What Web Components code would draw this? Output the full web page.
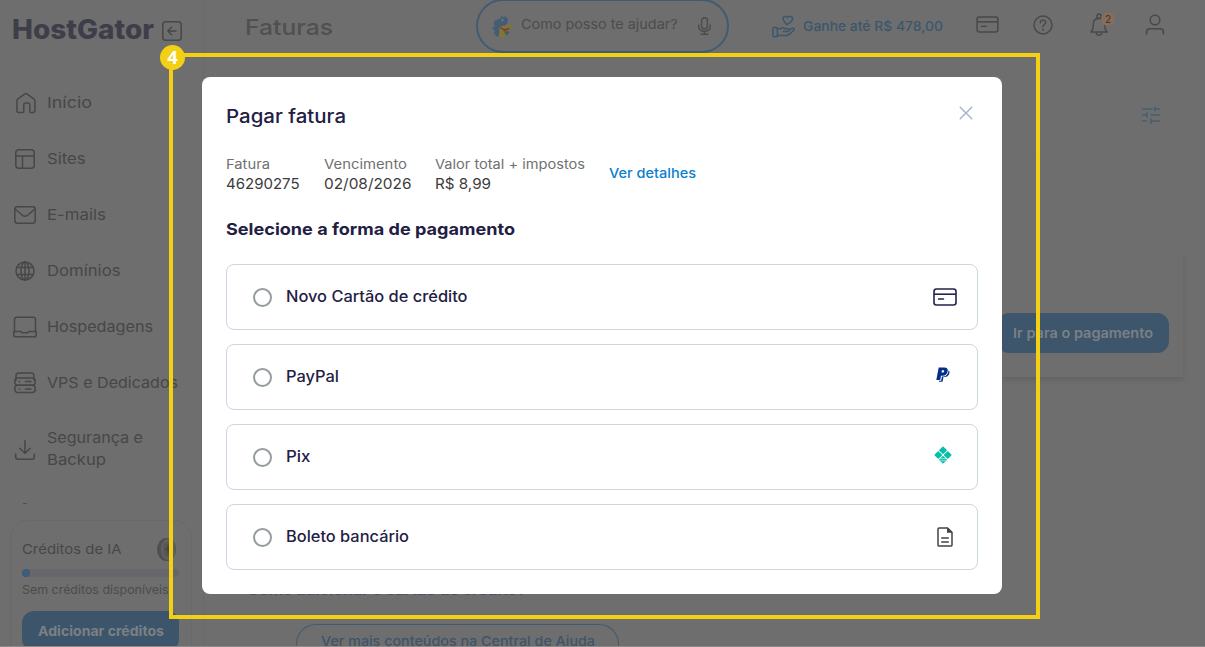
<!DOCTYPE html>
<html lang="pt-BR">
  <head>
    <meta charset="UTF-8">
    <meta name="viewport" content="width=device-width, initial-scale=1.0">

    <title>Faturas</title>

    <style>
      body {
        margin: 0;
        overflow: hidden;
        background: #6e6e6e;
        font-family: Inter, "Liberation Sans", sans-serif;
      }
    </style>
  </head>

  <body>
    <invoice-app></invoice-app>

    <template id="app-template">
      <style>
        :host {
          display: grid;
          grid-template-columns: 204px 1fr;
          position: relative;
          box-sizing: border-box;
          width: 1205px;
          height: 647px;
          overflow: hidden;
          border-bottom: 1px solid #8b8b8b;
        }

        pay-dialog {
          position: absolute;
          left: 202px;
          top: 77px;
        }

        step-marker {
          position: absolute;
          left: 169px;
          top: 53px;
        }
      </style>

      <side-bar></side-bar>
      <main-area></main-area>

      <pay-dialog heading="Pagar fatura">
        <info-pair label="Fatura" value="46290275" lw="44" vw="73.5"></info-pair>
        <info-pair label="Vencimento" value="02/08/2026" lw="83" vw="87.5"></info-pair>
        <info-pair label="Valor total + impostos" value="R$ 8,99" lw="150" vw="56"></info-pair>
        <pay-option slot="option" icon="card" width="181.5">Novo Cartão de crédito</pay-option>
        <pay-option slot="option" icon="paypal" width="53">PayPal</pay-option>
        <pay-option slot="option" icon="pix" width="24.5">Pix</pay-option>
        <pay-option slot="option" icon="doc" width="123">Boleto bancário</pay-option>
      </pay-dialog>

      <step-marker>4</step-marker>
    </template>

    <template id="sidebar-template">
      <style>
        :host {
          display: flex;
          flex-direction: column;
          box-sizing: border-box;
          height: 646px;
          overflow: hidden;
          border-right: 1px solid #6a6a6a;
          color: #474747;
        }

        .brand {
          display: flex;
          align-items: center;
          flex: none;
          height: 59px;
          margin-bottom: 16px;
          padding-left: 12px;
          gap: 8px;
        }

        .brand hg-icon {
          margin-top: 3px;
        }

        .logo {
          font-size: 27px;
          font-weight: 800;
          color: #3e3e4a;
        }

        .cut {
          flex: none;
          height: 32px;
          padding-left: 23px;
        }

        .cut i {
          display: block;
          width: 4px;
          height: 1px;
          margin-top: 15px;
          background: #515151;
        }

        .credits {
          box-sizing: border-box;
          width: 182px;
          height: 140px;
          flex: none;
          margin-left: 10px;
          padding: 16px 12px 0 11px;
          border: 1px solid #696969;
          border-radius: 18px;
        }

        .title {
          display: flex;
          justify-content: space-between;
          align-items: center;
          height: 24px;
          font-size: 13.5px;
          padding-right: 3px;
        }

        .bar {
          height: 8px;
          margin-top: 8px;
          border-radius: 4px;
          background: #66666b;
        }

        .bar::before {
          content: "";
          display: block;
          width: 8px;
          height: 8px;
          border-radius: 4px;
          background: #3d5c77;
        }

        .note {
          margin-top: 4px;
          line-height: 18px;
          font-size: 12px;
          color: #4c4c4c;
        }

        .button {
          display: flex;
          justify-content: center;
          align-items: center;
          height: 40px;
          margin-top: 12px;
          border-radius: 12px;
          background: #3c556a;
          color: #7b8085;
          font-size: 13.5px;
          font-weight: 700;
        }
      </style>

      <div class="brand">
        <fit-text class="logo" width="142">HostGator</fit-text>
        <hg-icon name="collapse" width="20" height="20"></hg-icon>
      </div>
      <nav>
        <nav-item icon="home" width="45">Início</nav-item>
        <nav-item icon="layout" width="38.5">Sites</nav-item>
        <nav-item icon="mail" width="59">E-mails</nav-item>
        <nav-item icon="globe" width="73.5">Domínios</nav-item>
        <nav-item icon="laptop" width="106">Hospedagens</nav-item>
        <nav-item icon="server" width="131">VPS e Dedicados</nav-item>
        <nav-item icon="download" width="96" second="Backup" second-width="59" tall>Segurança e</nav-item>
      </nav>
      <div class="cut"><i></i></div>
      <div class="credits">
        <div class="title">
          <fit-text width="99.5">Créditos de IA</fit-text>
          <hg-icon name="coin" width="19" height="23"></hg-icon>
        </div>
        <div class="bar"></div>
        <div class="note"><fit-text width="146.5">Sem créditos disponíveis</fit-text></div>
        <div class="button"><fit-text width="126">Adicionar créditos</fit-text></div>
      </div>
    </template>

    <template id="main-template">
      <style>
        :host {
          display: block;
          height: 646px;
          overflow: hidden;
          color: #484848;
        }

        header {
          display: flex;
          align-items: center;
          height: 52px;
          padding-left: 41px;
        }

        h1 {
          width: 231px;
          margin: 2px 0 0;
          font-size: 22px;
          font-weight: 500;
          color: #505050;
        }

        .search {
          display: flex;
          align-items: center;
          flex: none;
          box-sizing: border-box;
          width: 253px;
          height: 54px;
          padding: 0 16px 0 13px;
          border: 2px solid #415b72;
          border-radius: 27px;
          font-size: 13.5px;
          color: #4c4c4c;
        }

        .search fit-text {
          margin: 0 auto 4px 8px;
        }

        .gain {
          display: flex;
          align-items: center;
          gap: 8px;
          margin-left: 43px;
          color: #3c566c;
          font-size: 13.5px;
          font-weight: 500;
        }

        .tools {
          display: grid;
          grid-template-columns: repeat(4, 24px);
          gap: 32px;
          align-items: center;
          justify-items: center;
          margin: 0 0 3px 32px;
        }

        .bell {
          position: relative;
          display: block;
          height: 24px;
        }

        .bell b {
          position: absolute;
          left: 11px;
          top: -1px;
          width: 14px;
          line-height: 14px;
          border-radius: 7px;
          text-align: center;
          font-size: 10px;
          font-weight: 500;
          background: #866d5c;
          color: #453a33;
        }

        .filters {
          display: flex;
          justify-content: flex-end;
          align-items: center;
          box-sizing: border-box;
          height: 82px;
          margin: 22px 22px 0 16px;
          padding-right: 22px;
          border-bottom: 1px solid #6c6c6c;
          color: #46606f;
        }

        .invoice {
          display: flex;
          justify-content: flex-end;
          align-items: flex-end;
          box-sizing: border-box;
          height: 197px;
          margin: 24px 22px 0 16px;
          padding: 0 14px 24px;
          box-shadow: 0 3px 5px #636363;
          background: #6e6e6e;
          clip-path: inset(76px -6px -8px 0);
        }

        .pay {
          display: flex;
          justify-content: center;
          align-items: center;
          width: 172px;
          height: 40px;
          border-radius: 12px;
          background: #3d566b;
          color: #7b8085;
          font-size: 13.5px;
          font-weight: 600;
        }

        .help {
          color: #3f5468;
          padding: 204px 0 0 43px;
          font-size: 15px;
          font-weight: 700;
          line-height: 18px;
        }

        .more {
          display: flex;
          align-items: flex-start;
          justify-content: center;
          box-sizing: border-box;
          width: 323px;
          height: 22px;
          margin: 25px 0 0 49px;
          padding-top: 6px;
          border: 1px solid #425a70;
          border-bottom: 0;
          border-radius: 20px 20px 0 0;
          font-size: 13.5px;
          line-height: 20px;
          font-weight: 500;
        }
      </style>

      <header>
        <h1><fit-text width="88">Faturas</fit-text></h1>
        <div class="search">
          <hg-icon name="gator" width="22" height="24"></hg-icon>
          <fit-text width="156.5">Como posso te ajudar?</fit-text>
          <hg-icon name="mic" width="13" height="18"></hg-icon>
        </div>
        <div class="gain">
          <hg-icon name="hand" width="23" height="24"></hg-icon>
          <fit-text width="140">Ganhe até R$ 478,00</fit-text>
        </div>
        <div class="tools">
          <hg-icon name="card" width="23" height="17"></hg-icon>
          <hg-icon name="help" width="20" height="20"></hg-icon>
          <span class="bell"><hg-icon name="bell" width="18" height="24"></hg-icon><b>2</b></span>
          <hg-icon name="user" width="20" height="21"></hg-icon>
        </div>
      </header>
      <div class="filters"><hg-icon name="filter" width="20" height="18"></hg-icon></div>
      <div class="invoice"><div class="pay"><fit-text width="140">Ir para o pagamento</fit-text></div></div>
      <div class="help">
        <fit-text width="279">Como adicionar o cartão de crédito?</fit-text>
        <div class="more"><fit-text width="274">Ver mais conteúdos na Central de Ajuda</fit-text></div>
      </div>
    </template>

    <template id="dialog-template">
      <style>
        :host {
          display: block;
          box-sizing: border-box;
          width: 800px;
          height: 517px;
          padding: 24px;
          border-radius: 8px;
          background: #fff;
          color: #1f2044;
        }

        .top {
          display: flex;
          justify-content: space-between;
          height: 30px;
          line-height: 31px;
          font-size: 18.5px;
          font-weight: 500;
        }

        .top hg-icon {
          margin: 5px 5px 0 0;
          color: #a3b2cd;
        }

        .summary {
          display: flex;
          gap: 24px;
          height: 40px;
          margin-top: 23px;
        }

        .link {
          line-height: 38px;
          font-size: 13.5px;
          font-weight: 500;
          color: #0d7fcd;
        }

        h2 {
          margin: 24px 0;
          line-height: 22px;
          font-size: 16.5px;
          font-weight: 700;
        }

        .options {
          display: grid;
          gap: 14px;
        }
      </style>

      <div class="top">
        <fit-text class="heading" width="120"></fit-text>
        <hg-icon name="close" width="14" height="14"></hg-icon>
      </div>
      <div class="summary">
        <slot></slot>
        <fit-text class="link" width="87">Ver detalhes</fit-text>
      </div>
      <h2><fit-text width="289">Selecione a forma de pagamento</fit-text></h2>
      <div class="options"><slot name="option"></slot></div>
    </template>

    <script>
      (function() {
        const CARD = '<rect x="1" y="1" width="22" height="16" rx="2.4" fill="none" stroke="currentColor" stroke-width="1.6"/><path d="M1 6.2h22" stroke="currentColor" stroke-width="1.6"/><path d="M5.5 11h5" stroke="currentColor" stroke-width="1.5" stroke-linecap="round"/>';

        // each entry: viewBox, markup
        const ICONS = {
          collapse: ['0 0 20 20', '<g fill="none" stroke="currentColor" stroke-width="1.5" stroke-linecap="round" stroke-linejoin="round"><rect x=".8" y=".8" width="18.4" height="18.4" rx="2.8"/><path d="M14 10H6M9.5 6.3L5.8 10l3.7 3.7"/></g>'],
          home: ['0 0 24 24', '<path d="M4 9.5Q4 8.5 5 7.8l7-4.9q1-.7 2 0l7 5.3q.9.7.9 1.7v9.6q0 2-1.7 2h-2.4q-1 0-1-1v-7q0-1.6-1.6-1.6h-2.8q-1.6 0-1.6 1.6v7q0 1-1 1H5.6q-1.7 0-1.7-2z"/>'],
          layout: ['0 0 24 24', '<rect x="2.8" y="2.8" width="18.4" height="18.4" rx="3"/><path d="M3 9h18M9.5 9v12"/>'],
          mail: ['0 0 24 24', '<rect x="1.8" y="3.8" width="20.4" height="16.4" rx="2.6"/><path d="M2 6l7.5 6.3q2.5 1.9 5 0L22 6"/>'],
          globe: ['0 0 24 24', '<circle cx="12" cy="12" r="9"/><ellipse cx="12" cy="12" rx="4" ry="9"/><path d="M12 3v18M4 8.6h16M4 15.4h16"/>'],
          laptop: ['0 0 24 24', '<path d="M1.5 16V4.500q0-2.200 2.200-2.200h16.600q2.200 0 2.200 2.200V16M.8 16.500h6.500q1 0 1.500.7.5.6 1.400.6h3.600q.9 0 1.400-.6.5-.7 1.500-.7h6.500v3.800q0 1.500-1.500 1.500H2.300q-1.500 0-1.500-1.500z"/>'],
          server: ['0 0 24 24', '<path d="M3 9V4.800Q3 2 5.600 2h12.800Q21 2 21 4.800V9"/><rect x="1.800" y="7" width="20.400" height="7.300" rx="3"/><rect x="1.800" y="14.300" width="20.400" height="7.300" rx="3"/><path d="M6.300 10.600h.4M12.500 10.600H18M6.300 17.900h.4M12.500 17.900H18"/>'],
          download: ['0 0 24 24', '<path d="M12 2.500V15M6.800 10.300L12 15.200l5.200-4.900M2.700 16v3q0 2.200 2.200 2.200h14.200q2.200 0 2.200-2.200v-3"/>'],
          coin: ['0 0 19 23', '<ellipse cx="9.5" cy="11.5" rx="9.5" ry="11.5" fill="#505050"/><ellipse cx="11" cy="11.5" rx="7.4" ry="10.5" fill="#606060"/><ellipse cx="11" cy="11.5" rx="5.3" ry="8" fill="#585858"/><path d="M11 6l1.6 3.6L15 11l-2.4 1.8L11 17l-1.5-4.2L7.2 11l2.3-1.4z" fill="#494949"/>'],
          gator: ['0 0 22 24', '<path d="M3 9l1-3 2 .5 1-2 2 .7L10 2l2.500 1 2-.5L17 5l-.5 4.500-3 2.500 5 6.500-3 3.500-9 1-3.500-3L4 17l-3-3 2.500-1.500z" fill="#425d76"/><path d="M8.500 11.500q5 1.500 8-1l4 1-.5 3.500q-4 4-8 1.500l3.500 5-2 2-6-.5q1-4 1-11.500z" fill="#857337"/><path d="M8 10.500q3 4.500 7 4.500l4-1.500q-2 4-6 3-4-1.500-5-6z" fill="#743d32"/><circle cx="11.500" cy="6" r="1.200" fill="#757575"/>'],
          mic: ['0 0 13 18', '<g fill="none" stroke="currentColor" stroke-width="1.4" stroke-linecap="round"><rect x="3.6" y=".8" width="5.8" height="11" rx="2.9"/><path d="M.8 8v1q0 5.3 5.7 5.3T12.200 9V8M6.500 14.500v2.600M3 17.200h7"/></g>'],
          hand: ['0 0 23 24', '<g fill="none" stroke="currentColor" stroke-width="1.5" stroke-linejoin="round" stroke-linecap="round"><path d="M14.500 10.700l-3-4.500q-1.200-2.400.7-3.600 1.800-.8 3.200 1 2-2 4-1 2 1.400.8 3.700-1.400 2.700-5.700 4.400z"/><rect x="1" y="13.500" width="4.400" height="9.300" rx="1"/><path d="M5.500 14.800h2.800q1.800-1.600 3.800-.6l1.300.6h2.300q1.600.2 1.600 1.300 0 1.400-1.700 1.400h-4.200M17.300 15.800l2.900-1.400q1.500-.6 2 .6.2 1-2.200 2.800l-3.200 2.800q-1.200 1-3 1H5.500"/></g>'],
          card: ['0 0 24 18', CARD],
          help: ['0 0 20 20', '<g fill="none" stroke="currentColor" stroke-width="1.4" stroke-linecap="round"><circle cx="10" cy="10" r="9"/><path d="M7.400 7.800q0-2.700 2.600-2.700t2.600 2.300q0 1.300-1.400 2.200-1.200.8-1.200 2.200"/></g><circle cx="10" cy="14.700" r="1"/>'],
          bell: ['0 0 18 24', '<g fill="none" stroke="currentColor" stroke-width="1.4" stroke-linejoin="round"><path d="M.8 19q2.500-2.300 2.500-6V11q0-5.500 5.700-5.800 5.700.3 5.700 5.800v2q0 3.700 2.500 6z"/><circle cx="9" cy="3.200" r="2.200"/><path d="M6 19.300q.3 2.900 3 2.900t3-2.900"/></g>'],
          user: ['0 0 20 21', '<g fill="none" stroke="currentColor" stroke-width="1.5" stroke-linecap="round"><circle cx="10" cy="6" r="4.800"/><path d="M1.600 20v-2q0-3.300 3.300-3.300h10.200q3.300 0 3.300 3.300v2"/></g>'],
          filter: ['0 0 20 18', '<path d="M1 3h11M14 .8v4.400M14 3h5M1 9h4.500M6 6.500v5M9.500 9H19M1 15h5M10 12.700v5M10 15h9" fill="none" stroke="currentColor" stroke-width="1.7"/>'],
          close: ['0 0 14 14', '<path d="M1.200 1.200l11.600 11.600M12.800 1.200L1.200 12.800" stroke="currentColor" stroke-width="1.4" stroke-linecap="round"/>'],
          paypal: ['0 0 14 16', '<path d="M2.700.4h5.600q4 0 3.400 3.600Q11 8.700 6.500 8.700H5L4.200 13H.3z" fill="#003087"/><path d="M5.900 3.200h1.400q1.100 0 .9 1.200T6.700 5.500H5.500z" fill="#fff"/><path d="M12.700 3.300q1.200 1 .7 3-.8 3.600-4.700 3.600H7.500l-1 4.800H2.900l.2-1h2L6 9.500h1.800q3.900-.3 4.900-6.200z" fill="#003087"/>'],
          pix: ['0 0 18 18', '<g fill="#05bfa8" stroke="#05bfa8" stroke-width="1.400" stroke-linejoin="round"><path d="M9 1.200l3.200 3L9 7.300l-3.200-3.100zM1.200 9l3-3.100L7.500 9l-3.300 3.100zM16.800 9l-3-3.100L10.500 9l3.300 3.100zM9 10.800l3.200 3L9 16.800l-3.200-3z"/></g><path d="M5 12.700h8M6 14.800h6" stroke="#fff" stroke-width=".6"/>'],
          doc: ['0 0 16 20', '<path d="M10.500.9H2.200Q1 .9 1 2.100v15.800q0 1.200 1.200 1.200h11.600q1.200 0 1.200-1.200V5.400z" fill="none" stroke="currentColor" stroke-width="1.500"/><path d="M10 .6v5.100h5.400z" fill="currentColor"/><path d="M4.200 11h7.600M4.200 15h7.600" stroke="currentColor" stroke-width="1.500"/>']
        };

        const fromTemplate = (element, id) => {
          const shadow = element.attachShadow({ mode: 'open' });
          shadow.appendChild(document.getElementById(id).content.cloneNode(true));
          return shadow;
        };

        class HgIcon extends HTMLElement {
          connectedCallback() {
            if (this.shadowRoot) return;
            const name = this.getAttribute('name');
            const [box, markup] = ICONS[name];
            const isNav = this.hasAttribute('outline');
            const width = this.getAttribute('width');
            const height = this.getAttribute('height');
            this.attachShadow({ mode: 'open' }).innerHTML = `
              <style>
                :host { display: block; flex: none; width: ${width}px; height: ${height}px; }
                svg { display: block; }
              </style>
              <svg width="${width}" height="${height}" viewBox="${box}" ${isNav ? 'fill="none" stroke="currentColor" stroke-width="1.5" stroke-linecap="round" stroke-linejoin="round"' : 'fill="currentColor"'}>${markup}</svg>`;
          }
        }

        // Widens the line of text so that it takes the given width
        class FitText extends HTMLElement {
          connectedCallback() {
            if (!this.shadowRoot) {
              this.attachShadow({ mode: 'open' }).innerHTML = `
                <style>
                  :host { display: inline-block; flex: none; white-space: nowrap; width: ${this.getAttribute('width')}px; }
                  span { display: inline-block; transform-origin: 0 50%; }
                </style>
                <span><slot></slot></span>`;
            }
            this.fit();
            requestAnimationFrame(() => this.fit());
          }

          fit() {
            const span = this.shadowRoot.querySelector('span');
            if (!span.offsetWidth) return;
            span.style.transform = 'none';
            const natural = span.getBoundingClientRect().width;
            span.style.transform = `scaleX(${parseFloat(this.getAttribute('width')) / natural})`;
          }
        }

        class NavItem extends HTMLElement {
          connectedCallback() {
            if (this.shadowRoot) return;
            const second = this.getAttribute('second');
            this.attachShadow({ mode: 'open' }).innerHTML = `
              <style>
                :host {
                  display: flex;
                  align-items: center;
                  height: 56px;
                  padding-left: 13px;
                  gap: 10px;
                  font-size: 15px;
                  line-height: 22px;
                }
                :host([tall]) { height: 77px; }
                .text { display: flex; flex-direction: column; align-items: flex-start; margin-top: -1px; }
              </style>
              <hg-icon name="${this.getAttribute('icon')}" width="24" height="24" outline></hg-icon>
              <div class="text">
                <fit-text width="${this.getAttribute('width')}">${this.textContent}</fit-text>
                ${second ? `<fit-text width="${this.getAttribute('second-width')}">${second}</fit-text>` : ''}
              </div>`;
          }
        }

        class InfoPair extends HTMLElement {
          connectedCallback() {
            if (this.shadowRoot) return;
            this.attachShadow({ mode: 'open' }).innerHTML = `
              <style>
                :host { display: flex; flex-direction: column; align-items: flex-start; }
                .label { line-height: 20px; font-size: 13px; color: #717171; }
                .value { line-height: 20px; font-size: 15px; color: #3c3c3c; }
              </style>
              <fit-text class="label" width="${this.getAttribute('lw')}">${this.getAttribute('label')}</fit-text>
              <fit-text class="value" width="${this.getAttribute('vw')}">${this.getAttribute('value')}</fit-text>`;
          }
        }

        // width, height, distance to the right edge, colour
        const OPTION_ICONS = {
          card: [24, 18, 20, '#22234a'],
          paypal: [14, 16, 27, '#003087'],
          pix: [18, 18, 25, '#05bfa8'],
          doc: [16, 20, 24, '#434343']
        };

        class PayOption extends HTMLElement {
          connectedCallback() {
            if (this.shadowRoot) return;
            const icon = this.getAttribute('icon');
            const [width, height, right, color] = OPTION_ICONS[icon];
            const lift = icon === 'paypal' || icon === 'pix' ? 4 : 0;
            this.attachShadow({ mode: 'open' }).innerHTML = `
              <style>
                :host {
                  display: flex;
                  align-items: center;
                  box-sizing: border-box;
                  height: 66px;
                  padding: 0 ${right}px 0 26px;
                  border: 1px solid #cbd7e0;
                  border-radius: 8px;
                  font-size: 15.5px;
                  font-weight: 500;
                }
                .radio {
                  box-sizing: border-box;
                  width: 19px;
                  height: 19px;
                  margin: 1px 14px 0 0;
                  border: 2px solid #939da0;
                  border-radius: 50%;
                }
                fit-text { margin-bottom: 2px; }
                hg-icon { margin: 0 0 ${lift}px auto; color: ${color}; }
              </style>
              <span class="radio"></span>
              <fit-text width="${this.getAttribute('width')}">${this.textContent}</fit-text>
              <hg-icon name="${icon}" width="${width}" height="${height}"></hg-icon>`;
          }
        }

        class StepMarker extends HTMLElement {
          constructor() {
            super();
            this.attachShadow({ mode: 'open' }).innerHTML = `
              <style>
                :host {
                  box-sizing: border-box;
                  width: 871px;
                  height: 566px;
                  border: 4px solid #f4d014;
                }
                b {
                  position: absolute;
                  left: -13px;
                  top: -12px;
                  width: 25px;
                  height: 25px;
                  border-radius: 50%;
                  background: #f4d014;
                  color: #fff;
                  text-align: center;
                  font: 700 18.5px/23px "Open Sans", sans-serif;
                }
              </style>
              <b><slot></slot></b>`;
          }
        }

        class SideBar extends HTMLElement {
          constructor() {
            super();
            fromTemplate(this, 'sidebar-template');
          }
        }

        class MainArea extends HTMLElement {
          constructor() {
            super();
            fromTemplate(this, 'main-template');
          }
        }

        class PayDialog extends HTMLElement {
          constructor() {
            super();
            this.shadow = fromTemplate(this, 'dialog-template');
          }

          connectedCallback() {
            this.shadow.querySelector('.heading').textContent = this.getAttribute('heading');
          }
        }

        class InvoiceApp extends HTMLElement {
          constructor() {
            super();
            fromTemplate(this, 'app-template');
          }
        }

        customElements.define('hg-icon', HgIcon);
        customElements.define('fit-text', FitText);
        customElements.define('nav-item', NavItem);
        customElements.define('info-pair', InfoPair);
        customElements.define('pay-option', PayOption);
        customElements.define('step-marker', StepMarker);
        customElements.define('side-bar', SideBar);
        customElements.define('main-area', MainArea);
        customElements.define('pay-dialog', PayDialog);
        customElements.define('invoice-app', InvoiceApp);
      }());
    </script>
  </body>
</html>
